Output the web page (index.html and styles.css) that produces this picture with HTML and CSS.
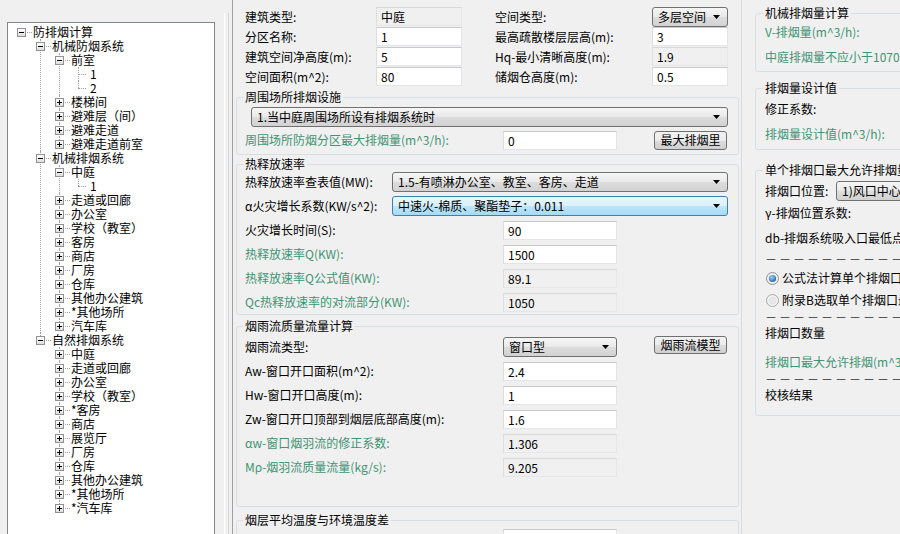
FILE: index.html
```html
<!DOCTYPE html>
<html lang="zh-CN">
<head>
    <meta charset="UTF-8">
    <title>防排烟计算</title>
    <link rel="stylesheet" href="styles.css">
</head>
<body>
<div class="app">
    <div class="nav">
        <ul class="tree">
            <li><div class="node"><i class="exp open"></i><span>防排烟计算</span></div>
                <ul>
                    <li><div class="node"><i class="exp open"></i><span>机械防烟系统</span></div>
                        <ul>
                            <li><div class="node"><i class="exp open"></i><span>前室</span></div>
                                <ul>
                                    <li><div class="node leaf"><span>1</span></div></li>
                                    <li><div class="node leaf"><span>2</span></div></li>
                                </ul>
                            </li>
                            <li><div class="node"><i class="exp"></i><span>楼梯间</span></div></li>
                            <li><div class="node"><i class="exp"></i><span>避难层（间）</span></div></li>
                            <li><div class="node"><i class="exp"></i><span>避难走道</span></div></li>
                            <li><div class="node"><i class="exp"></i><span>避难走道前室</span></div></li>
                        </ul>
                    </li>
                    <li><div class="node"><i class="exp open"></i><span>机械排烟系统</span></div>
                        <ul>
                            <li><div class="node"><i class="exp open"></i><span>中庭</span></div>
                                <ul>
                                    <li><div class="node leaf"><span>1</span></div></li>
                                </ul>
                            </li>
                            <li><div class="node"><i class="exp"></i><span>走道或回廊</span></div></li>
                            <li><div class="node"><i class="exp"></i><span>办公室</span></div></li>
                            <li><div class="node"><i class="exp"></i><span>学校（教室）</span></div></li>
                            <li><div class="node"><i class="exp"></i><span>客房</span></div></li>
                            <li><div class="node"><i class="exp"></i><span>商店</span></div></li>
                            <li><div class="node"><i class="exp"></i><span>厂房</span></div></li>
                            <li><div class="node"><i class="exp"></i><span>仓库</span></div></li>
                            <li><div class="node"><i class="exp"></i><span>其他办公建筑</span></div></li>
                            <li><div class="node"><i class="exp"></i><span>*其他场所</span></div></li>
                            <li><div class="node"><i class="exp"></i><span>汽车库</span></div></li>
                        </ul>
                    </li>
                    <li><div class="node"><i class="exp open"></i><span>自然排烟系统</span></div>
                        <ul>
                            <li><div class="node"><i class="exp"></i><span>中庭</span></div></li>
                            <li><div class="node"><i class="exp"></i><span>走道或回廊</span></div></li>
                            <li><div class="node"><i class="exp"></i><span>办公室</span></div></li>
                            <li><div class="node"><i class="exp"></i><span>学校（教室）</span></div></li>
                            <li><div class="node"><i class="exp"></i><span>*客房</span></div></li>
                            <li><div class="node"><i class="exp"></i><span>商店</span></div></li>
                            <li><div class="node"><i class="exp"></i><span>展览厅</span></div></li>
                            <li><div class="node"><i class="exp"></i><span>厂房</span></div></li>
                            <li><div class="node"><i class="exp"></i><span>仓库</span></div></li>
                            <li><div class="node"><i class="exp"></i><span>其他办公建筑</span></div></li>
                            <li><div class="node"><i class="exp"></i><span>*其他场所</span></div></li>
                            <li><div class="node"><i class="exp"></i><span>*汽车库</span></div></li>
                        </ul>
                    </li>
                </ul>
            </li>
        </ul>
    </div>

    <div class="split"></div>

    <div class="main">
        <div class="basic">
            <label>建筑类型:</label>
            <input class="ro" type="text" value="中庭" readonly>
            <label class="col4">空间类型:</label>
            <div class="select">多层空间<svg width="7" height="4" viewBox="0 0 7 4"><path d="M0 0h7L3.5 4z"/></svg></div>

            <label>分区名称:</label>
            <input type="text" value="1">
            <label class="col4">最高疏散楼层层高(m):</label>
            <input type="text" value="3">

            <label>建筑空间净高度(m):</label>
            <input type="text" value="5">
            <label class="col4">Hq-最小清晰高度(m):</label>
            <input class="ro" type="text" value="1.9" readonly>

            <label>空间面积(m^2):</label>
            <input type="text" value="80">
            <label class="col4">储烟仓高度(m):</label>
            <input type="text" value="0.5">
        </div>

        <fieldset class="grp g1">
            <legend>周围场所排烟设施</legend>
            <div class="select wide">1.当中庭周围场所设有排烟系统时<svg width="7" height="4" viewBox="0 0 7 4"><path d="M0 0h7L3.5 4z"/></svg></div>
            <div class="row">
                <label class="lbl green">周围场所防烟分区最大排烟量(m^3/h):</label>
                <input type="text" value="0">
                <button>最大排烟里</button>
            </div>
        </fieldset>

        <fieldset class="grp g2">
            <legend>热释放速率</legend>
            <div class="row">
                <label class="lbl short">热释放速率查表值(MW):</label>
                <div class="select long">1.5-有喷淋办公室、教室、客房、走道<svg width="7" height="4" viewBox="0 0 7 4"><path d="M0 0h7L3.5 4z"/></svg></div>
            </div>
            <div class="row">
                <label class="lbl short">α火灾增长系数(KW/s^2):</label>
                <div class="select long hot">中速火-棉质、聚酯垫子：0.011<svg width="7" height="4" viewBox="0 0 7 4"><path d="M0 0h7L3.5 4z"/></svg></div>
            </div>
            <div class="row">
                <label class="lbl">火灾增长时间(S):</label>
                <input type="text" value="90">
            </div>
            <div class="row">
                <label class="lbl green">热释放速率Q(KW):</label>
                <input type="text" value="1500">
            </div>
            <div class="row">
                <label class="lbl green">热释放速率Q公式值(KW):</label>
                <input class="ro" type="text" value="89.1" readonly>
            </div>
            <div class="row">
                <label class="lbl green">Qc热释放速率的对流部分(KW):</label>
                <input class="ro" type="text" value="1050" readonly>
            </div>
        </fieldset>

        <fieldset class="grp g3">
            <legend>烟雨流质量流量计算</legend>
            <div class="row">
                <label class="lbl">烟雨流类型:</label>
                <div class="select">窗口型<svg width="7" height="4" viewBox="0 0 7 4"><path d="M0 0h7L3.5 4z"/></svg></div>
                <button class="top">烟雨流模型</button>
            </div>
            <div class="row">
                <label class="lbl">Aw-窗口开口面积(m^2):</label>
                <input type="text" value="2.4">
            </div>
            <div class="row">
                <label class="lbl">Hw-窗口开口高度(m):</label>
                <input type="text" value="1">
            </div>
            <div class="row">
                <label class="lbl">Zw-窗口开口顶部到烟层底部高度(m):</label>
                <input type="text" value="1.6">
            </div>
            <div class="row">
                <label class="lbl green">αw-窗口烟羽流的修正系数:</label>
                <input class="ro" type="text" value="1.306" readonly>
            </div>
            <div class="row">
                <label class="lbl green">Mρ-烟羽流质量流量(kg/s):</label>
                <input class="ro" type="text" value="9.205" readonly>
            </div>
        </fieldset>

        <fieldset class="grp g4">
            <legend>烟层平均温度与环境温度差</legend>
            <div class="row">
                <label class="lbl"></label>
                <input type="text" value="">
            </div>
        </fieldset>
    </div>

    <div class="aside">
        <fieldset class="grp r1">
            <legend>机械排烟量计算</legend>
            <div class="ln green">V-排烟量(m^3/h):</div>
            <div class="ln green mt5">中庭排烟量不应小于107000m^3/h</div>
        </fieldset>

        <fieldset class="grp r2">
            <legend>排烟量设计值</legend>
            <div class="ln">修正系数:</div>
            <div class="ln green mt5">排烟量设计值(m^3/h):</div>
        </fieldset>

        <fieldset class="grp r3">
            <legend>单个排烟口最大允许排烟量</legend>
            <div class="ln">
                <label class="pos">排烟口位置:</label>
                <div class="select pick">1)风口中心距墙大于1.5倍口径<svg width="7" height="4" viewBox="0 0 7 4"><path d="M0 0h7L3.5 4z"/></svg></div>
            </div>
            <div class="ln mt2">γ-排烟位置系数:</div>
            <div class="ln mt5">db-排烟系统吸入口最低点之下烟气层厚度(m):</div>
            <div class="dash mt5">－－－－－－－－－－－－－－</div>
            <div class="ln mt3">
                <svg class="radio" width="13" height="13" viewBox="0 0 13 13">
                    <defs>
                        <radialGradient id="dot" cx="40%" cy="35%" r="70%">
                            <stop offset="0" stop-color="#9fd4f7"/>
                            <stop offset="1" stop-color="#1c5f9e"/>
                        </radialGradient>
                    </defs>
                    <circle cx="6.5" cy="6.5" r="6" fill="#eef0f2" stroke="#8e9194"/>
                    <circle cx="6.5" cy="6.5" r="3.6" fill="url(#dot)"/>
                </svg>
                <span>公式法计算单个排烟口最大允许排烟量</span>
            </div>
            <div class="ln mt2">
                <svg class="radio" width="13" height="13" viewBox="0 0 13 13">
                    <circle cx="6.5" cy="6.5" r="6" fill="#f3f3f3" stroke="#a6a8aa"/>
                    <circle cx="6.5" cy="6.5" r="4" fill="#e6e6e6"/>
                </svg>
                <span>附录B选取单个排烟口最大允许排烟量</span>
            </div>
            <div class="dash mt1">－－－－－－－－－－－－－－</div>
            <div class="ln">排烟口数量</div>
            <div class="ln green mt9">排烟口最大允许排烟(m^3/h):</div>
            <div class="dash mt1">－－－－－－－－－－－－－－</div>
            <div class="ln">校核结果</div>
        </fieldset>
    </div>
</div>
</body>
</html>
```

FILE: styles.css
```css
body { margin: 0; background: #f0f0f0; color: #000; font: 12px/16px "Noto Sans CJK SC", "Noto Sans", sans-serif; }
.app { display: flex; width: 900px; height: 534px; overflow: hidden; }

/* tree */
.nav { flex: none; width: 222px; padding: 22px 0 0 7px; box-sizing: border-box; }
.tree { width: 208px; height: 540px; box-sizing: border-box; margin: 0; padding: 2px 0 0; list-style: none; background: #fff; border: 1px solid #828790; }
.tree ul { margin: 0; padding: 0 0 0 19px; list-style: none; }
.tree ul li { position: relative; }
.tree ul li::before { content: ""; position: absolute; left: 13px; top: 0; bottom: 0; border-left: 1px dotted #a0a0a0; }
.tree ul li:last-child::before { bottom: auto; height: 7px; }
.node { display: flex; align-items: center; height: 14px; line-height: 14px; white-space: nowrap; }
.node::before { content: ""; order: 1; width: 5px; margin: 0 1px; border-top: 1px dotted #a0a0a0; }
.node span { order: 2; }
.node.leaf::before { width: 8px; margin: 0 4px 0 13px; }
.exp { position: relative; z-index: 1; order: 0; width: 9px; height: 9px; margin-left: 9px; box-sizing: border-box; border: 1px solid #919191;
    background: linear-gradient(#000, #000) center / 5px 1px no-repeat, linear-gradient(#000, #000) center / 1px 5px no-repeat, linear-gradient(#fff, #dedede); }
.exp.open { background: linear-gradient(#000, #000) center / 5px 1px no-repeat, linear-gradient(#fff, #dedede); }

.split { flex: none; width: 10px; margin-top: 13px;
    background: linear-gradient(90deg, transparent 2px, #fff 2px, #fff 3px, transparent 3px, transparent 6px, #d6d6d6 6px, #d6d6d6 7px, transparent 7px); }

/* middle */
.main { flex: none; width: 510px; box-sizing: border-box; border-left: 1px solid #a0a0a0; border-right: 1px solid #dadada; }
.basic { display: grid; grid-template-columns: 131px 86px 33px 157px 76px; grid-auto-rows: 20px; align-items: start; padding: 7px 0 0 12px; }
.basic label { align-self: center; white-space: nowrap; }
.basic .col4 { grid-column: 4; }

input { font: inherit; width: 114px; height: 19px; box-sizing: border-box; margin: 0; padding: 0 4px; background: #fff; border: 1px solid; border-color: #c8c9cc #e3e4e8 #e3e4e8 #dcdde1; outline: none; }
input.ro { background: #f0f0f0; border-color: #d8d8d8 #e6e6e6 #e6e6e6 #dedede; }
.basic input { width: 86px; }
.basic input:last-child, .basic .col4 + input { width: 76px; }

.select { display: flex; align-items: center; justify-content: space-between; width: 114px; height: 20px; box-sizing: border-box; padding: 0 7px 0 5px; white-space: nowrap; overflow: hidden;
    border: 1px solid #707070; border-radius: 3px; background: linear-gradient(#f6f6f6, #e9e9e9 50%, #dddddd 50%, #d2d2d2); }
.select svg { flex: none; }
.basic .select { width: 76px; }
.select.wide { width: 477px; margin-left: 6px; }
.select.long { width: 336px; }
.select.hot { border-color: #3c7fb1; background: linear-gradient(#eaf6fd, #d9f0fc 50%, #bee6fd 50%, #a7d9f5); }

button { font: inherit; width: 73px; height: 19px; margin-left: 37px; padding: 0; border: 1px solid #707070; border-radius: 3px; color: #000;
    background: linear-gradient(#f2f2f2, #ebebeb 50%, #dddddd 50%, #cfcfcf); }
button.top { align-self: flex-start; height: 18px; margin-top: -1px; }

.grp { min-width: 0; margin: 0 2px 0 3px; padding: 0 8px; border: 1px solid #d5dfe5; border-radius: 3px; }
.grp legend { margin-left: -2px; padding: 0 2px; line-height: 16px; white-space: nowrap; }
.row { display: flex; align-items: center; height: 20px; }
.row + .row { margin-top: 4px; }
.lbl { flex: none; width: 258px; white-space: nowrap; }
.lbl.short { width: 147px; }
.green { color: #3f9474; }

.g1 { margin-top: 2px; padding: 2px 8px 4px; }
.g1 .row { margin-top: 3px; }
.g2 { margin-top: 1px; padding-bottom: 2px; }
.g3 { margin-top: 3px; padding: 3px 8px 29px; }
.g4 { margin-top: 5px; }

/* right */
.aside { flex: none; width: 300px; }
.aside .grp { width: 240px; margin: 0 0 0 13px; padding: 0 9px; }
.ln { display: flex; align-items: center; height: 20px; white-space: nowrap; }
.dash { height: 12px; line-height: 12px; letter-spacing: 2px; white-space: nowrap; color: #333; }
.mt1 { margin-top: 1px; }
.mt2 { margin-top: 2px; }
.mt3 { margin-top: 3px; }
.mt5 { margin-top: 5px; }
.mt9 { margin-top: 9px; }
.r1 { margin-top: 5px !important; padding: 1px 9px 4px !important; }
.r2 { margin-top: 8px !important; padding: 3px 9px 5px !important; }
.r3 { margin-top: 12px !important; padding: 3px 9px 10px !important; }
.pos { width: 71px; flex: none; }
.select.pick { width: 160px; }
.radio { flex: none; margin: 0 3px 0 1px; }
```
